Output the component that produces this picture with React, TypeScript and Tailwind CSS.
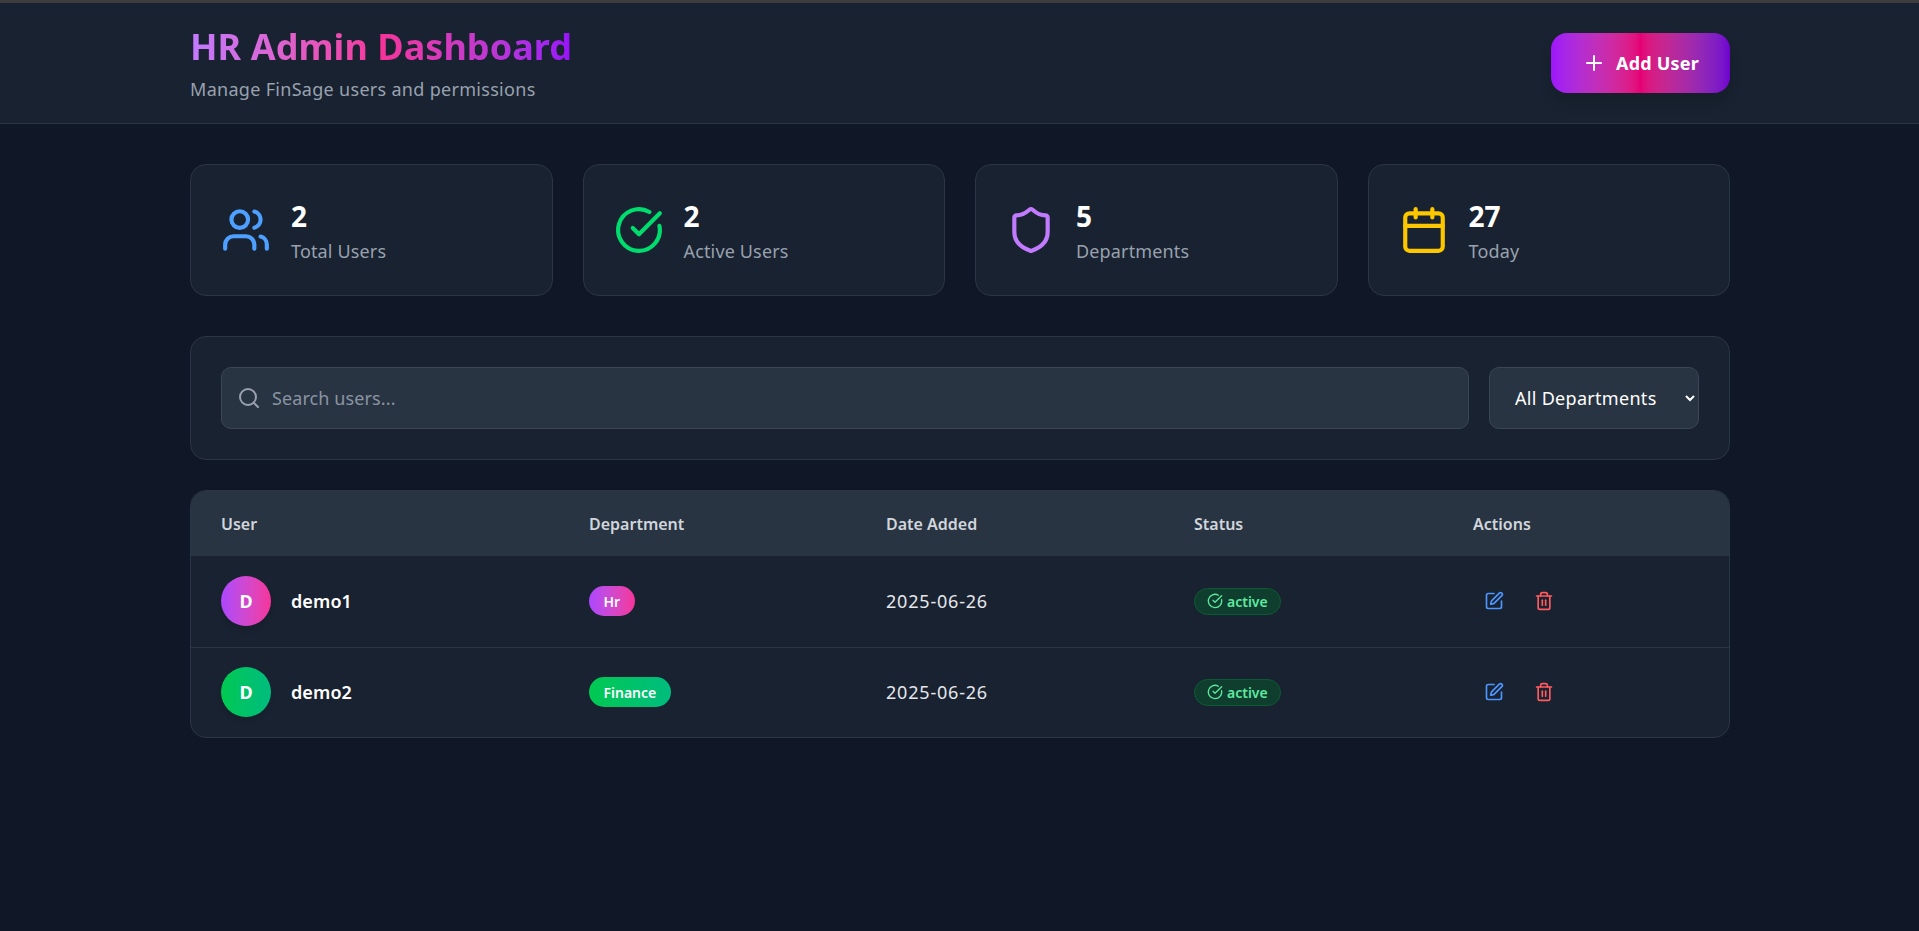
import { Users, CircleCheckBig, Shield, Calendar, Search, Plus, SquarePen, Trash2 } from "lucide-react";

const stats = [
  { icon: Users, color: "text-[#4da0ff]", value: "2", label: "Total Users" },
  { icon: CircleCheckBig, color: "text-[#00dc6e]", value: "2", label: "Active Users" },
  { icon: Shield, color: "text-[#c27aff]", value: "5", label: "Departments" },
  { icon: Calendar, color: "text-[#fdc700]", value: "27", label: "Today" },
];

const rows = [
  { name: "demo1", avatar: "bg-linear-to-r from-[#ad46ff] to-[#f6339a]", dept: "Hr" },
  { name: "demo2", avatar: "bg-linear-to-r from-[#00c950] to-[#00bc7d]", dept: "Finance" },
];

const font = "font-['Noto_Sans','Open_Sans',sans-serif]";

export default function App() {
  return (
    <div className={`min-h-[931px] bg-[#101828] ${font} border-t-[3px] border-[#3d3d3d]`}>
      <header className="h-[121px] bg-[#182230] border-b border-[#2a3545]">
        <div className="ml-[190px] w-[1540px] h-full flex items-center justify-between">
          <div className="mt-[2px]">
            <h1 className="text-[36px] leading-[44px] font-bold tracking-[0.05px] bg-linear-to-r from-[#c27aff] via-[#f6339a] to-[#9810fa] bg-clip-text text-transparent w-fit">
              HR Admin Dashboard
            </h1>
            <p className="mt-[6px] text-[18px] leading-[28px] text-[#99a1af] tracking-[0.3px]">Manage FinSage users and permissions</p>
          </div>
          <button className="h-[60px] w-[179px] rounded-[16px] bg-linear-to-r from-[#9d14fb] via-[#e60076] to-[#7000d0] text-white font-bold text-[18px] tracking-[0.2px] flex items-center justify-center gap-[10px] shadow-[0_10px_15px_-3px_rgba(0,0,0,0.15)]">
            <Plus size={24} strokeWidth={2} />
            Add User
          </button>
        </div>
      </header>
      <main className="ml-[190px] w-[1540px] pt-[40px]">
        <section className="grid grid-cols-4 gap-[30px]">
          {stats.map((s) => (
            <div key={s.label} className="h-[132px] rounded-[16px] bg-[#182230] border border-[#2a3545] flex items-center gap-[20px] pl-[30px]">
              <s.icon size={50} strokeWidth={2} className={s.color} />
              <div className="mt-[2px]">
                <div className="text-[28px] leading-[36px] font-bold text-white">{s.value}</div>
                <div className="mt-[3px] text-[18px] leading-[28px] text-[#99a1af] tracking-[0.15px]">{s.label}</div>
              </div>
            </div>
          ))}
        </section>
        <section className="mt-[40px] h-[124px] rounded-[16px] bg-[#182230] border border-[#2a3545] flex items-center gap-[20px] px-[30px]">
          <div className="flex-1 h-[62px] rounded-[10px] bg-[#283442] border border-[#3a4656] flex items-center gap-[11px] pl-[15px]">
            <Search size={24} className="text-[#99a1af]" />
            <span className="text-[18px] text-[#8a93a2] tracking-[0.1px]">Search users...</span>
          </div>
          <select className="w-[210px] h-[62px] rounded-[10px] bg-[#283442] border border-[#3a4656] text-white text-[18px] pl-[21px] pr-[8px] tracking-[0.3px]">
            <option>All Departments</option>
          </select>
        </section>
        <section className="mt-[30px] rounded-[16px] bg-[#182230] border border-[#2a3545] overflow-hidden">
          <table className="w-full table-fixed border-collapse">
            <thead>
              <tr className="h-[65px] bg-[#283442] text-left text-[16px] text-[#d1d5dc]">
                <th className="w-[368px] pl-[30px] font-semibold">User</th>
                <th className="w-[297px] pl-[30px] font-semibold">Department</th>
                <th className="w-[308px] pl-[30px] font-semibold">Date Added</th>
                <th className="w-[279px] pl-[30px] font-semibold">Status</th>
                <th className="pl-[30px] font-semibold">Actions</th>
              </tr>
            </thead>
            <tbody>
              {rows.map((r, i) => (
                <tr key={r.name} className={i === 0 ? "h-[91px] border-b border-[#2a3545]" : "h-[90px]"}>
                  <td className="pl-[30px]">
                    <div className="flex items-center gap-[20px]">
                      <div className={`w-[50px] h-[50px] rounded-full ${r.avatar} flex items-center justify-center text-white font-bold text-[18px] shadow-[0_4px_6px_-1px_rgba(0,0,0,0.1)]`}>D</div>
                      <span className="text-white font-semibold text-[18px] tracking-[0.1px]">{r.name}</span>
                    </div>
                  </td>
                  <td className="pl-[30px]">
                    <span className={`inline-flex items-center h-[30px] px-[14.5px] rounded-full ${r.avatar} text-white text-[14px] font-semibold`}>{r.dept}</span>
                  </td>
                  <td className="pl-[30px] text-[18px] text-[#e5e7eb] tracking-[0.8px]">2025-06-26</td>
                  <td className="pl-[30px]">
                    <span className="inline-flex items-center gap-[4px] h-[27px] px-[12px] rounded-full bg-[#0f3d2e] border border-[#0d5b35] text-[#5ee9a0] text-[14px] font-semibold">
                      <CircleCheckBig size={16} />
                      active
                    </span>
                  </td>
                  <td className="pl-[31px]">
                    <div className="flex items-center gap-[10px]">
                      <button className="p-[10px] text-[#4d96ff]"><SquarePen size={20} /></button>
                      <button className="p-[10px] text-[#ff5a5f]"><Trash2 size={20} /></button>
                    </div>
                  </td>
                </tr>
              ))}
            </tbody>
          </table>
        </section>
      </main>
    </div>
  );
}
